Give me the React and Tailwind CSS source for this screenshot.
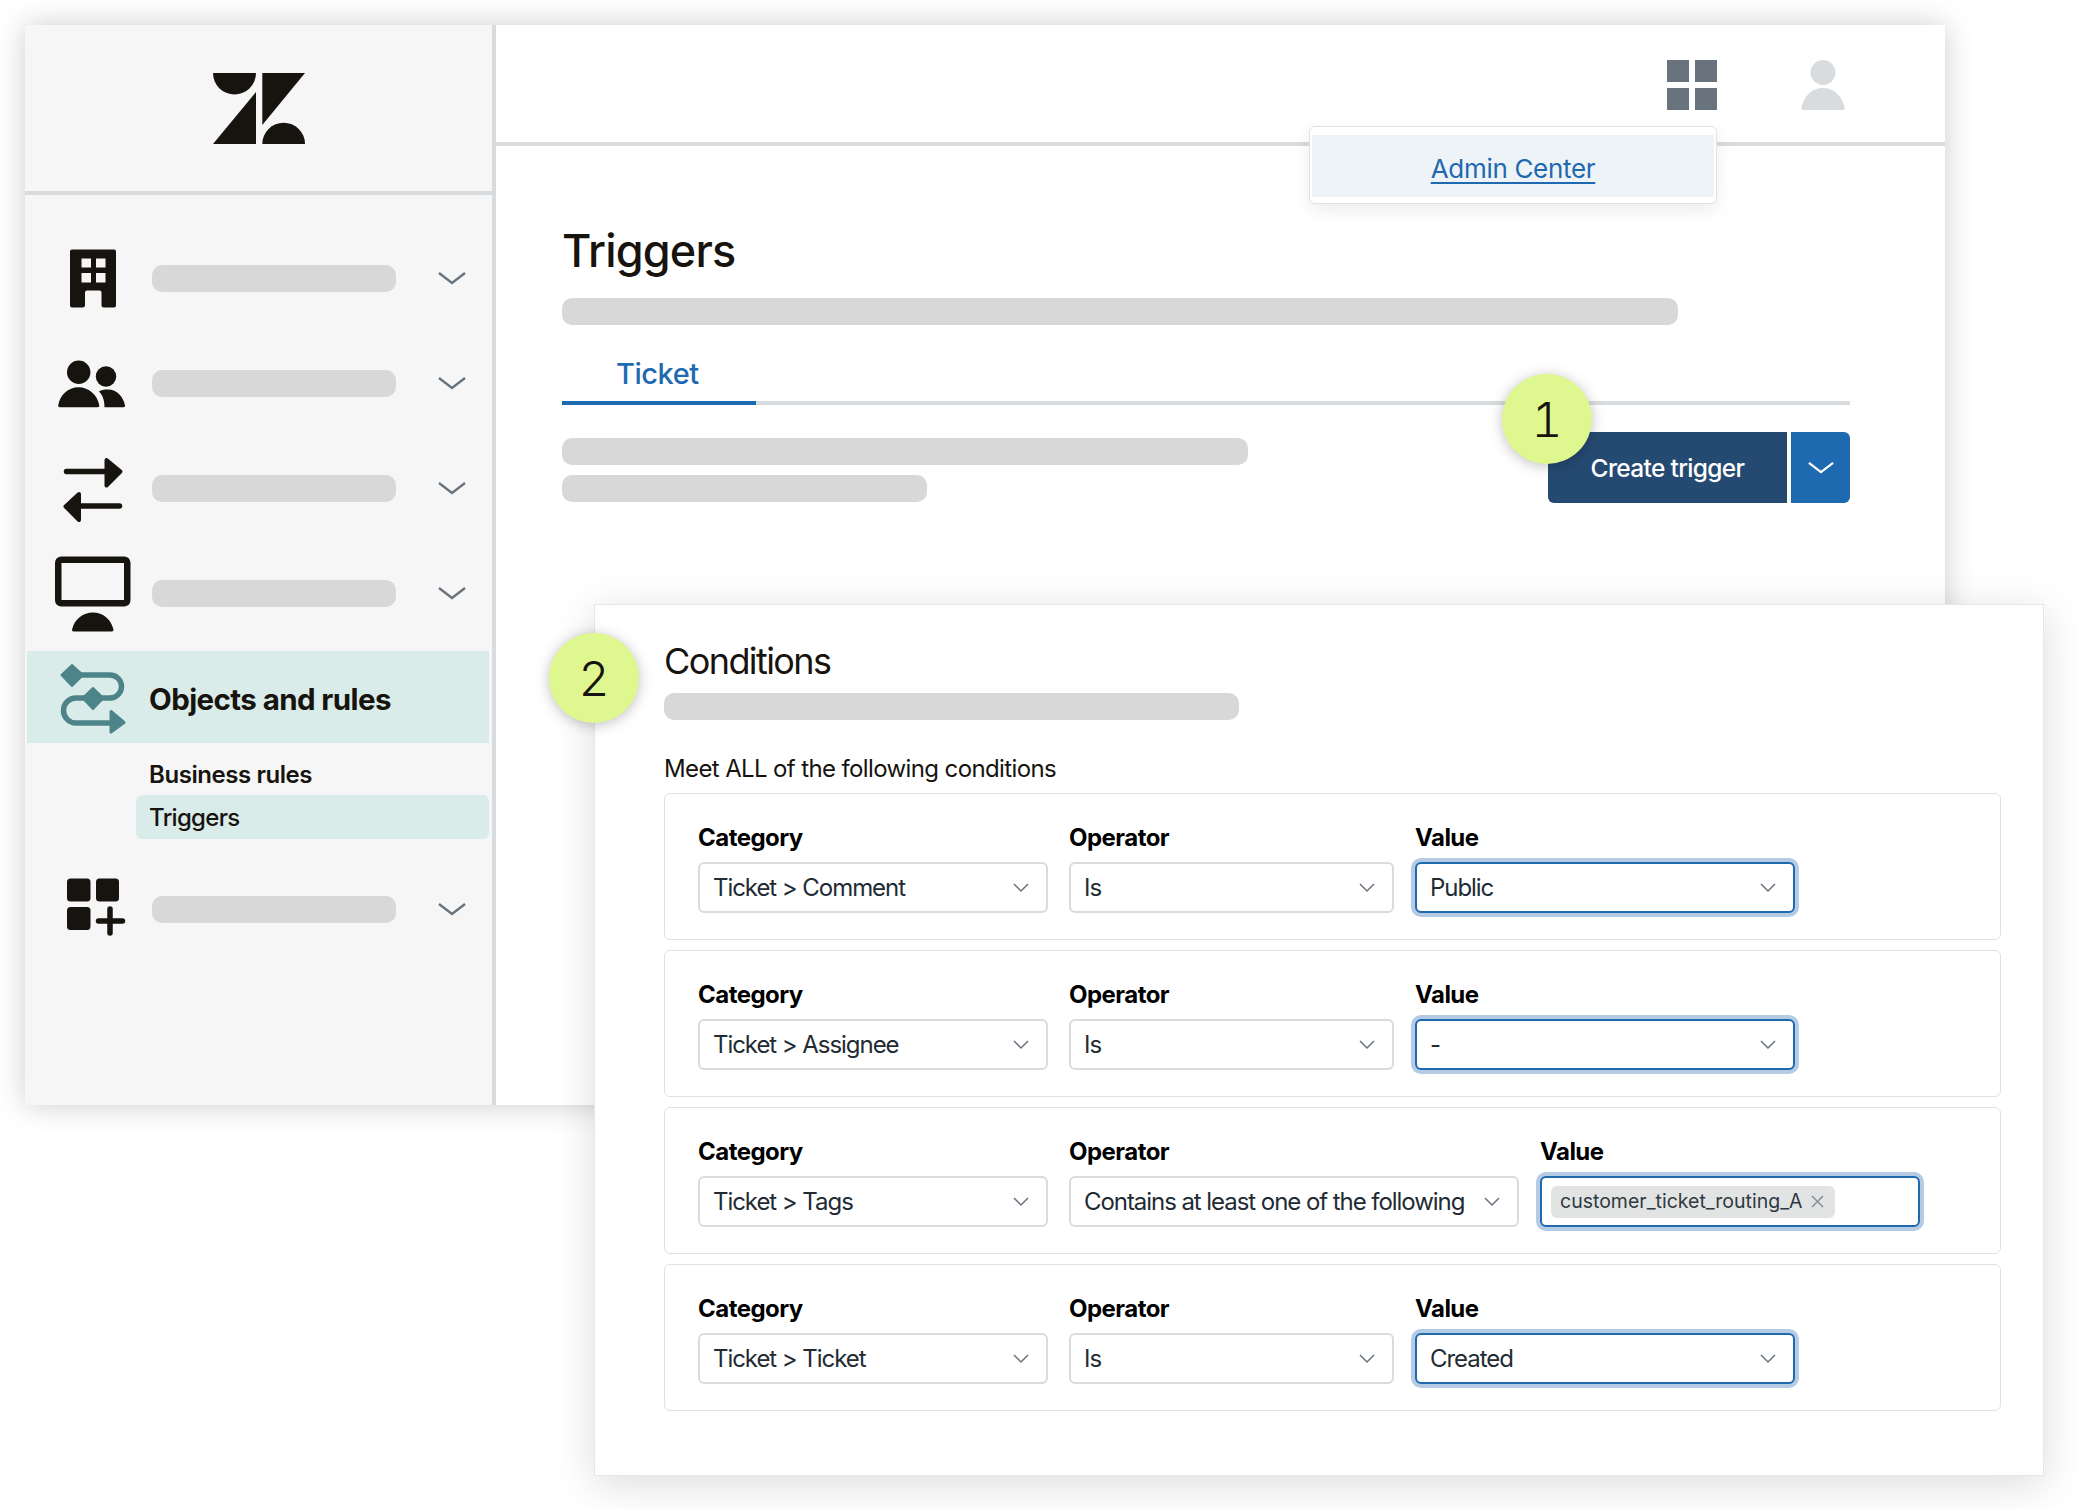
import React from 'react';

const skeleton = 'rounded-[10px] bg-[#d8d8d8]';

function Chevron({ className = 'w-[28px] h-[14px] text-[#68737d]' }) {
  return (
    <svg className={className} viewBox="0 0 28 14" fill="none" stroke="currentColor" strokeWidth="2.4">
      <path d="M1 2l13 10L27 2" />
    </svg>
  );
}

function SelectChevron() {
  return (
    <svg className="w-[16px] h-[10px] shrink-0 text-[#68737d]" viewBox="0 0 16 10" fill="none" stroke="currentColor" strokeWidth="1.5">
      <path d="M1 1l7 7 7-7" />
    </svg>
  );
}

function Logo() {
  return (
    <svg className="w-[92px] h-[71px] mt-[1px]" viewBox="0 0 92 71" fill="#17140f">
      <path d="M0 0H43A21.5 21.5 0 0 1 0 0Z" />
      <path d="M43 19V71H0Z" />
      <path d="M49.3 0H92L49.3 52Z" />
      <path d="M49.3 71A21.35 21.35 0 0 1 92 71Z" />
    </svg>
  );
}

function BuildingIcon() {
  return (
    <path
      fillRule="evenodd"
      d="M19 10.5H61a2 2 0 0 1 2 2V66.5a2 2 0 0 1-2 2H51a2.500 2.500 0 0 1-2.500-2.500V53.500a2 2 0 0 0-2-2H34a2 2 0 0 0-2 2V66a2.500 2.500 0 0 1-2.500 2.500H19a2 2 0 0 1-2-2V12.500a2 2 0 0 1 2-2ZM28.500 19.500V28.500H38V19.500ZM43 19.500V28.500H52.500V19.500ZM28.500 34V43.500H38V34ZM43 34V43.500H52.500V34Z"
    />
  );
}

function PeopleIcon() {
  return (
    <>
      <circle cx="25.700" cy="28.200" r="11.700" />
      <path d="M7 63.200C5.500 63.200 5 62.500 5.300 61C7 51 15 43.200 25.500 43.200S44.500 51 46.200 61C46.500 62.500 46 63.200 44.500 63.200Z" />
      <circle cx="53" cy="32.500" r="10.200" />
      <path d="M46 47.500C48 46 51 45.500 55 45.500C64 45.500 70.500 53 72 61.500C72.200 62.700 71.500 63.200 70.500 63.200H51.500C51.500 56 49.500 51 46 47.500Z" />
    </>
  );
}

function ArrowsIcon() {
  return (
    <>
      <path d="M13.500 22.500H56M66.500 57H27" fill="none" stroke="currentColor" strokeWidth="5.500" strokeLinecap="round" />
      <path d="M53.500 11L67.500 22.500L53.500 36.500Z" stroke="currentColor" strokeWidth="4" strokeLinejoin="round" />
      <path d="M26 45L12.500 57.500L26 71Z" stroke="currentColor" strokeWidth="4" strokeLinejoin="round" />
    </>
  );
}

function MonitorIcon() {
  return (
    <>
      <rect x="5.250" y="5.750" width="69" height="43.500" rx="3" fill="none" stroke="currentColor" strokeWidth="6.500" />
      <path d="M21 77.500C19 77.500 18.500 76.500 19.500 74C22 65 30 58.500 40 58.500S57.500 65 60 74C61 76.500 60.500 77.500 58.500 77.500Z" />
    </>
  );
}

function AppsIcon() {
  return (
    <>
      <rect x="14" y="8.500" width="23.500" height="23" rx="3.500" />
      <rect x="43" y="8.500" width="23" height="23" rx="3.500" />
      <rect x="14" y="37" width="23.500" height="23" rx="3.500" />
      <path d="M45.500 51H69.500M57 39V63" fill="none" stroke="currentColor" strokeWidth="5.500" strokeLinecap="round" />
    </>
  );
}

function ObjectsIcon() {
  return (
    <>
      <path
        d="M19 18H57A11.500 11.500 0 0 1 57 41H23A12.500 12.500 0 0 0 23 66H60"
        fill="none"
        stroke="currentColor"
        strokeWidth="5.500"
      />
      <path d="M19 8L30 18L19 29L8.500 18Z" stroke="currentColor" strokeWidth="2" strokeLinejoin="round" />
      <path d="M40 31L50.500 41L40 52L29.500 41Z" stroke="currentColor" strokeWidth="2" strokeLinejoin="round" />
      <path d="M58 54.500L71 65.500L58 75Z" stroke="currentColor" strokeWidth="3" strokeLinejoin="round" />
    </>
  );
}

function IconBox({ children, className = 'text-[#17140f]' }) {
  return (
    <svg className={`w-[80px] h-[80px] shrink-0 ${className}`} viewBox="0 0 80 80" fill="currentColor">
      {children}
    </svg>
  );
}

function NavRow({ icon }) {
  return (
    <div className="flex items-center h-[105px] pl-[28px]">
      <IconBox>{icon}</IconBox>
      <div className={`${skeleton} w-[244px] h-[27px] ml-[19px]`} />
      <div className="ml-[42px] -mt-[2px]">
        <Chevron />
      </div>
    </div>
  );
}

function Sidebar() {
  return (
    <aside className="w-[471px] h-full shrink-0 bg-[#f6f6f6] border-r-4 border-[#d8dcde]">
      <div className="h-[170px] flex items-center justify-center border-b-4 border-[#d8dcde]">
        <Logo />
      </div>
      <nav className="pt-[31px]">
        <NavRow icon={<BuildingIcon />} />
        <NavRow icon={<PeopleIcon />} />
        <NavRow icon={<ArrowsIcon />} />
        <NavRow icon={<MonitorIcon />} />

        <div className="flex items-center h-[92px] mt-[5px] ml-[2px] mr-[3px] pl-[26px] bg-[#d9ecea]">
          <IconBox className="text-[#4d8489]">
            <ObjectsIcon />
          </IconBox>
          <span className="ml-[16px] mt-[5px] text-[29.500px] font-bold tracking-[-0.02em] text-[#17140f]">Objects and rules</span>
        </div>

        <div className="h-[52px] pl-[124px] pt-[17px] text-[24px] leading-[30px] font-semibold tracking-[-0.018em] text-[#17140f]">
          Business rules
        </div>
        <div className="h-[44px] ml-[111px] mr-[3px] pl-[13px] pt-[1px] rounded-[6px] bg-[#d9ecea] text-[24px] leading-[44px] font-medium tracking-[-0.028em] text-[#17140f]">
          Triggers
        </div>

        <div className="mt-[18px]">
          <NavRow icon={<AppsIcon />} />
        </div>
      </nav>
    </aside>
  );
}

function Main() {
  return (
    <main className="flex-1 flex flex-col bg-white">
      <header className="h-[121px] shrink-0 flex justify-end gap-[84px] pt-[35px] pr-[100px] border-b-4 border-[#d8dcde]">
        <div className="grid grid-cols-2 gap-[6px] w-[50px] h-[50px]">
          <div className="bg-[#68737d]" />
          <div className="bg-[#68737d]" />
          <div className="bg-[#68737d]" />
          <div className="bg-[#68737d]" />
        </div>
        <svg className="w-[44px] h-[50px]" viewBox="0 0 44 50" fill="#d8dcde">
          <ellipse cx="22" cy="12.500" rx="12.500" ry="12.500" />
          <path d="M2 50C0.500 50 0 49 0.500 47C3 36 11 28 22 28S41 36 43.500 47C44 49 43.500 50 42 50Z" />
        </svg>
      </header>

      <div className="pl-[66px] pr-[95px]">
        <h1 className="mt-[78px] -mb-[1px] text-[45px] leading-[54px] font-medium tracking-[-0.018em] text-[#17140f]">Triggers</h1>
        <div className={`${skeleton} mt-[21px] w-[1116px] h-[27px]`} />

        <div className="h-[80px] border-b-4 border-[#d8dcde]">
          <div className="w-[194px] h-[80px] pl-[54px] pt-[31px] border-b-4 border-[#1f69b0] text-[29px] leading-[36px] font-medium tracking-[-0.016em] text-[#1f69b0]">
            Ticket
          </div>
        </div>

        <div className="flex justify-between items-start mt-[27px]">
          <div className="pt-[6px]">
            <div className={`${skeleton} w-[686px] h-[27px]`} />
            <div className={`${skeleton} w-[365px] h-[27px] mt-[10px]`} />
          </div>
          <div className="flex gap-[4px]">
            <button className="w-[239px] h-[71px] pt-[1px] rounded-l-[6px] bg-[#254a72] text-[24.500px] font-medium tracking-[-0.027em] text-white">
              Create trigger
            </button>
            <button className="w-[59px] h-[71px] flex items-center justify-center rounded-r-[6px] bg-[#1f69b0]">
              <Chevron className="w-[26px] h-[13px] text-white" />
            </button>
          </div>
        </div>
      </div>
    </main>
  );
}

function Field({ label, width, focused, children }) {
  return (
    <div>
      <div className="text-[24px] leading-[30px] font-bold tracking-[-0.022em] text-black">{label}</div>
      <div
        style={{ width }}
        className={
          focused
            ? 'mt-[9px] h-[51px] flex items-center rounded-[6px] border-2 border-[#1f69b0] ring-4 ring-[#b5cbe3] bg-white'
            : 'mt-[9px] h-[51px] flex items-center rounded-[6px] border-2 border-[#d8dcde] bg-white'
        }
      >
        {children}
      </div>
    </div>
  );
}

function SelectValue({ text }) {
  return (
    <div className="flex-1 flex items-center justify-between pl-[13px] pr-[17px]">
      <span className="text-[24px] tracking-[-0.044em] text-[#222b33] whitespace-nowrap">{text}</span>
      <SelectChevron />
    </div>
  );
}

function ConditionCard({ category, operator, operatorWidth = 325, value, tag }) {
  return (
    <div className="h-[147px] flex gap-[21px] pt-[29px] pl-[33px] rounded-[6px] border border-[#dfe1e3]">
      <Field label="Category" width={350}>
        <SelectValue text={category} />
      </Field>
      <Field label="Operator" width={operatorWidth}>
        <SelectValue text={operator} />
      </Field>
      <Field label="Value" width={380} focused>
        {tag ? (
          <div className="ml-[9px] h-[32px] flex items-center gap-[8px] pl-[9px] pr-[11px] rounded-[6px] bg-[#e2e4e4]">
            <span className="text-[19.500px] text-[#2f3941] whitespace-nowrap">{tag}</span>
            <svg className="w-[13px] h-[13px] text-[#87929d]" viewBox="0 0 13 13" fill="none" stroke="currentColor" strokeWidth="1.600">
              <path d="M1 1l11 11M12 1L1 12" />
            </svg>
          </div>
        ) : (
          <SelectValue text={value} />
        )}
      </Field>
    </div>
  );
}

function ConditionsPanel() {
  return (
    <section className="absolute left-[594px] top-[604px] w-[1450px] h-[872px] pt-[34px] pl-[69px] pr-[42px] bg-white border border-[#e4e6e8] shadow-[0_8px_40px_rgba(0,0,0,0.14)]">
      <h2 className="text-[36px] leading-[44px] tracking-[-0.044em] text-[#17140f]">Conditions</h2>
      <div className={`${skeleton} mt-[10px] w-[575px] h-[27px]`} />
      <p className="mt-[34px] text-[24px] leading-[30px] tracking-[-0.026em] text-[#17140f]">Meet ALL of the following conditions</p>
      <div className="mt-[9px] flex flex-col gap-[10px]">
        <ConditionCard category="Ticket > Comment" operator="Is" value="Public" />
        <ConditionCard category="Ticket > Assignee" operator="Is" value="-" />
        <ConditionCard
          category="Ticket > Tags"
          operator="Contains at least one of the following"
          operatorWidth={450}
          tag="customer_ticket_routing_A"
        />
        <ConditionCard category="Ticket > Ticket" operator="Is" value="Created" />
      </div>
    </section>
  );
}

function StepBadge({ className, children }) {
  return (
    <div
      className={`absolute w-[90px] h-[90px] flex items-center justify-center pt-[2px] rounded-full bg-[#dff78f] text-[48px] font-light tabular-nums text-[#17140f] shadow-[0_2px_14px_rgba(0,0,0,0.25)] ${className}`}
    >
      {children}
    </div>
  );
}

export default function App() {
  return (
    <div className="relative w-[2078px] h-[1509px] overflow-hidden bg-white pl-[25px] pt-[25px] font-[Inter,sans-serif]">
      <div className="flex w-[1920px] h-[1080px] shadow-[0_0_28px_rgba(0,0,0,0.2)]">
        <Sidebar />
        <Main />
      </div>

      <div className="absolute left-[1309px] top-[126px] w-[408px] h-[78px] pt-[8px] px-[2px] rounded-[6px] border border-[#dfe1e3] bg-white shadow-[0_6px_18px_rgba(0,0,0,0.08)]">
        <div className="h-[62px] pt-[5px] flex items-center justify-center bg-[#eef3f8]">
          <a className="text-[26px] tracking-[-0.012em] text-[#1f69b0] underline underline-offset-[4px]" href="#admin">Admin Center</a>
        </div>
      </div>

      <StepBadge className="left-[1502px] top-[374px]">1</StepBadge>
      <ConditionsPanel />
      <StepBadge className="left-[549px] top-[633px]">2</StepBadge>
    </div>
  );
}
